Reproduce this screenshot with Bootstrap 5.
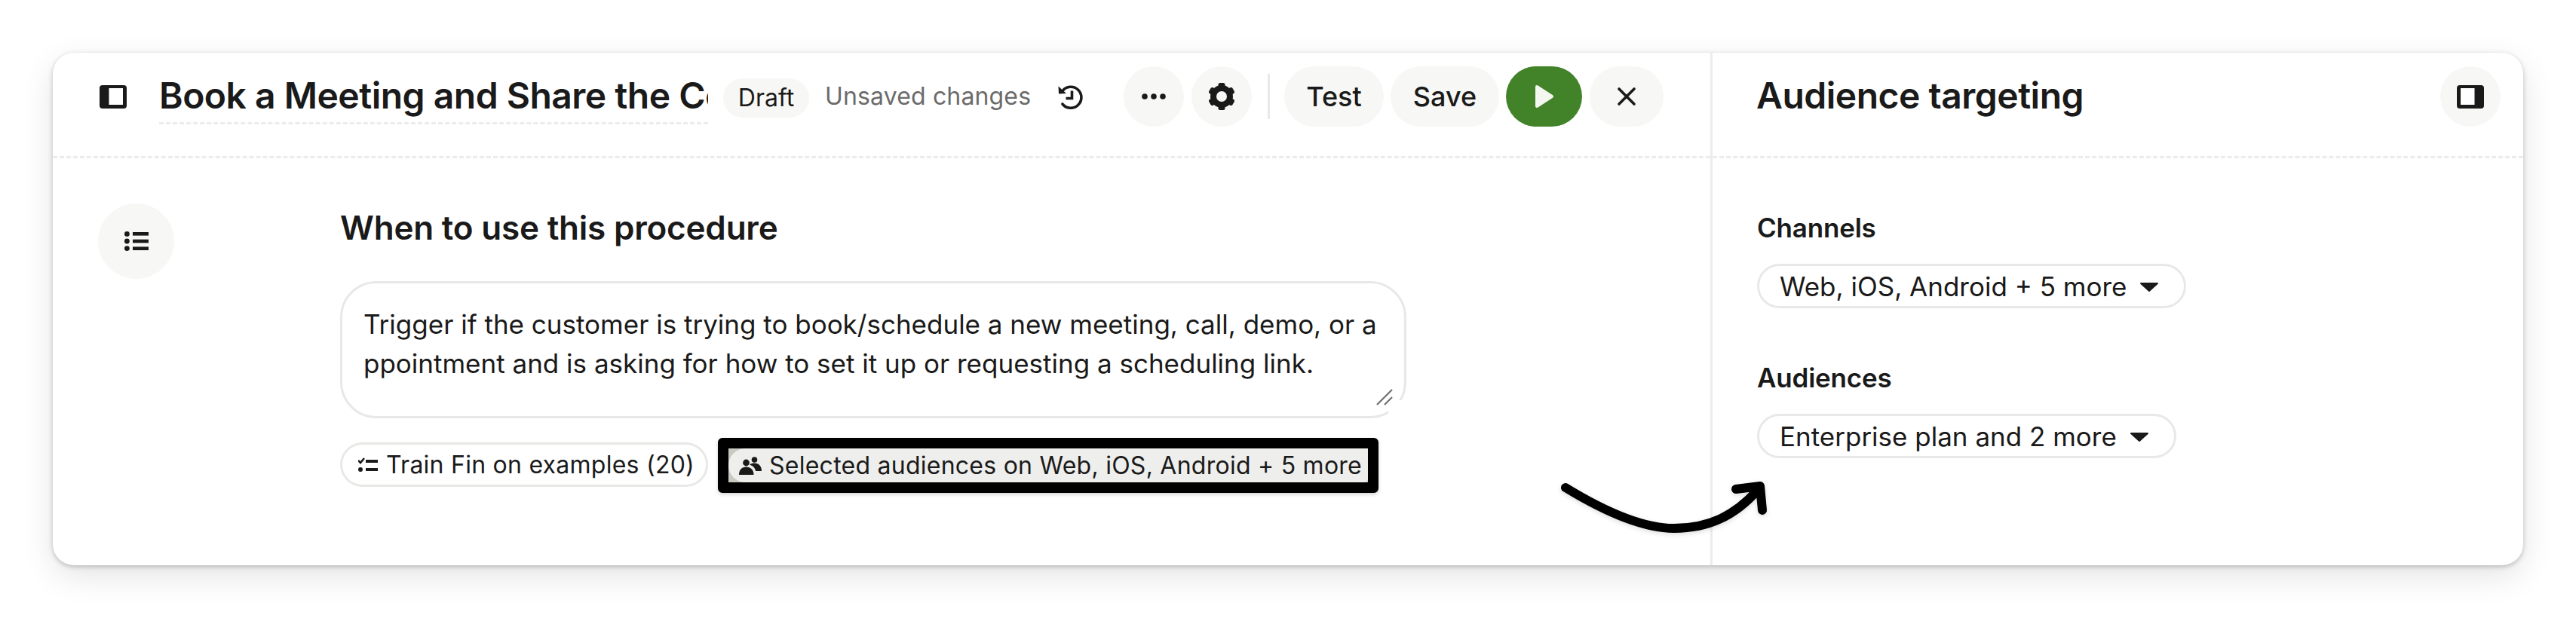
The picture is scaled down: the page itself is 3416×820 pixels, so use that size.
<!DOCTYPE html>
<html lang="en">
<head>
  <meta charset="UTF-8" />
  <title>Audience targeting</title>
  <link href="https://cdn.jsdelivr.net/npm/bootstrap@5.3.0/dist/css/bootstrap.min.css" rel="stylesheet">
  <style>
    body { background: #fff; font-family: "Inter", "Liberation Sans", sans-serif; color: #1a1a1a; padding: 70px 0 0 70px; width: 3416px; height: 820px; overflow: hidden; }
    .shell { width: 3276px; height: 680px; border-radius: 28px; background: #fff; box-shadow: 0 2px 6px rgba(0,0,0,.22), 0 14px 44px rgba(0,0,0,.11); }
    .main-pane { width: 2201px; border-right: 3px solid #ececea; }
    .side-pane { width: 1075px; }
    .pane-head { height: 140px; padding-top: 18px; border-bottom: 3px dashed #ececea; }
    .main-pane .pane-head { padding-left: 62px; padding-right: 62px; }
    .side-pane .pane-head { padding-left: 58px; padding-right: 30px; }
    .panel-icon { margin-top: 25px; flex-shrink: 0; }
    .title-clip { width: 728px; margin-left: 43px; margin-top: 4px; height: 73px; line-height: 70px; font-size: 48px; font-weight: 600; letter-spacing: -.5px; white-space: nowrap; overflow: hidden; border-bottom: 3px dashed #ececea; }
    .draft-tag { margin-left: 20px; height: 52px; width: 114px; border-radius: 26px; background: #f7f7f5; font-size: 32px; }
    .unsaved-note { margin-left: 21px; margin-top: 16px; font-size: 32px; letter-spacing: .15px; color: #6b6b6b; }
    .history-icon { margin-left: 35px; margin-top: 23px; flex-shrink: 0; }
    .soft-btn { height: 80px; min-width: 80px; padding: 0; border: 0; border-radius: 40px; background: #f7f7f5; color: #1a1a1a; font-size: 36px; font-weight: 500; }
    .soft-btn:hover { background: #f7f7f5; color: #1a1a1a; }
    .act-gap { margin-left: 10px; }
    .act-gap-tight { margin-left: 9px; }
    .test-btn { width: 132px; }
    .save-btn { width: 144px; }
    .play-btn { width: 101px; background: #42832a; }
    .play-btn:hover { background: #42832a; }
    .close-btn { width: 98px; }
    .head-sep { width: 3px; height: 60px; margin: 10px 19px 0 21px; background: #e8e8e6; }
    .side-title { font-size: 48px; font-weight: 600; letter-spacing: -.5px; margin: 4px 0 0; line-height: 70px; }
    .outline-btn { width: 101px; height: 100px; border-radius: 50%; background: #f7f7f5; margin-left: 60px; margin-top: 60px; flex-shrink: 0; }
    .proc-col { width: 1414px; margin-left: 220px; padding-top: 60px; }
    .proc-heading { font-size: 44px; font-weight: 600; line-height: 64px; margin: 0 0 39px; letter-spacing: -.2px; }
    .field-wrap { height: 182px; }
    .trigger-field { height: 182px; border: 3px solid #e8e8e6; border-radius: 48px; padding: 28px 28px; font-size: 35px; line-height: 52px; color: #1a1a1a; resize: none; word-break: break-all; font-family: inherit; overflow: hidden; }
    .trigger-field:focus { border-color: #e8e8e6; box-shadow: none; }
    .resize-grip { position: absolute; right: -2px; bottom: -2px; }
    .chip-row { margin-top: 26px; }
    .chip { height: 59px; border: 3px solid #e8e8e6; border-radius: 30px; font-size: 32px; letter-spacing: .25px; background: #fff; white-space: nowrap; }
    .train-chip { width: 488px; margin-top: 6px; padding-left: 21px; gap: 11px; }
    .callout-box { margin-left: 13px; width: 876px; height: 73px; border: 14px solid #000; border-radius: 6px; background: #c9c9c0; box-shadow: 0 2px 5px rgba(0,0,0,.18); }
    .callout-chip { height: 45px; width: 100%; background: #eeeeec; border-radius: 28px 0 6px 28px; padding-left: 14px; gap: 10px; font-size: 32px; letter-spacing: .25px; white-space: nowrap; }
    .side-body { padding: 60px 0 0 59px; }
    .side-label { font-size: 35px; font-weight: 600; letter-spacing: -.2px; line-height: 64px; margin: 0; }
    .pick-chip { height: 59px; border: 3px solid #e8e8e6; border-radius: 30px; padding: 2px 0 0 27px; font-size: 35px; background: #fff; color: #1a1a1a; margin-top: 16px; white-space: nowrap; gap: 17px; }
    .pick-chip:hover { background: #fff; color: #1a1a1a; border-color: #e8e8e6; }
    .channels-chip { width: 569px; }
    .audiences-chip { width: 556px; }
    .side-group + .side-group { margin-top: 60px; }
    .swoosh { position: absolute; left: 1990px; top: 560px; filter: drop-shadow(0 2px 3px rgba(0,0,0,.14)); }
  </style>
</head>
<body>
  <div class="shell d-flex position-relative">
    <!-- left pane -->
    <div class="main-pane">
      <div class="pane-head d-flex align-items-start">
        <svg class="panel-icon" width="36" height="31" viewBox="0 0 36 31"><rect width="36" height="31" rx="4" fill="#1a1a1a"/><rect x="12.5" y="4" width="18.5" height="22" fill="#fff"/></svg>
        <div class="title-clip">Book a Meeting and Share the Co</div>
        <span class="draft-tag d-flex align-items-center justify-content-center mt-3">Draft</span>
        <span class="unsaved-note">Unsaved changes</span>
        <svg class="history-icon" width="34" height="34" viewBox="0 0 34 34" fill="none"><path d="M7 9.5A14 14 0 1 1 7 27" stroke="#1a1a1a" stroke-width="3.6" stroke-linecap="round"/><path d="M1.5 3.5 2 13.5l10-.5z" fill="#1a1a1a"/><path d="M19.5 9.5v10h-8" stroke="#1a1a1a" stroke-width="3.6"/></svg>
        <div class="ms-auto d-flex align-items-start">
          <button class="btn soft-btn d-flex align-items-center justify-content-center" type="button" aria-label="More">
            <svg width="32" height="8" viewBox="0 0 32 8"><circle cx="4" cy="4" r="3.8" fill="#1a1a1a"/><circle cx="16" cy="4" r="3.8" fill="#1a1a1a"/><circle cx="28" cy="4" r="3.8" fill="#1a1a1a"/></svg>
          </button>
          <button class="btn soft-btn act-gap d-flex align-items-center justify-content-center" type="button" aria-label="Settings">
            <svg width="36" height="36" viewBox="0 0 36 36"><circle cx="18" cy="18" r="11" fill="none" stroke="#1a1a1a" stroke-width="8"/><g fill="#1a1a1a"><rect x="13.5" y="0" width="9" height="8" rx="2.5"/><rect x="13.5" y="0" width="9" height="8" rx="2.5" transform="rotate(60 18 18)"/><rect x="13.5" y="0" width="9" height="8" rx="2.5" transform="rotate(120 18 18)"/><rect x="13.5" y="0" width="9" height="8" rx="2.5" transform="rotate(180 18 18)"/><rect x="13.5" y="0" width="9" height="8" rx="2.5" transform="rotate(240 18 18)"/><rect x="13.5" y="0" width="9" height="8" rx="2.5" transform="rotate(300 18 18)"/></g></svg>
          </button>
          <div class="head-sep"></div>
          <button class="btn soft-btn test-btn" type="button">Test</button>
          <button class="btn soft-btn save-btn act-gap-tight" type="button">Save</button>
          <button class="btn soft-btn play-btn act-gap-tight d-flex align-items-center justify-content-center" type="button" aria-label="Run">
            <svg width="26" height="32" viewBox="0 0 26 32"><path d="M3 3 23 16 3 29z" fill="#f4f6f0" stroke="#f4f6f0" stroke-width="4" stroke-linejoin="round"/></svg>
          </button>
          <button class="btn soft-btn close-btn act-gap d-flex align-items-center justify-content-center" type="button" aria-label="Close">
            <svg width="26" height="26" viewBox="0 0 26 26"><path d="M3 3l20 20M23 3 3 23" stroke="#1a1a1a" stroke-width="3.6" stroke-linecap="round"/></svg>
          </button>
        </div>
      </div>
      <div class="d-flex">
        <div class="outline-btn d-flex align-items-center justify-content-center">
          <svg width="32" height="26" viewBox="0 0 32 26" fill="#1a1a1a"><circle cx="3.4" cy="3.4" r="3.4"/><circle cx="3.4" cy="13" r="3.4"/><circle cx="3.4" cy="22.6" r="3.4"/><rect x="11" y="1" width="21" height="4.6"/><rect x="11" y="10.7" width="21" height="4.6"/><rect x="11" y="20.4" width="21" height="4.6"/></svg>
        </div>
        <div class="proc-col">
          <h2 class="proc-heading">When to use this procedure</h2>
          <div class="field-wrap position-relative">
            <textarea class="form-control trigger-field" rows="2" aria-label="When to use this procedure">Trigger if the customer is trying to book/schedule a new meeting, call, demo, or appointment and is asking for how to set it up or requesting a scheduling link.</textarea>
            <svg class="resize-grip" width="44" height="44" viewBox="0 0 44 44"><rect x="18" y="18" width="26" height="26" fill="#fff"/><path d="M3 24 23 4M13 24 23 14" stroke="#6f6f6f" stroke-width="2.2" fill="none"/></svg>
          </div>
          <div class="chip-row d-flex align-items-start">
            <span class="chip train-chip d-inline-flex align-items-center">
              <svg width="26" height="20" viewBox="0 0 26 20" fill="#1a1a1a"><path d="M0 4l3 3 5-6" fill="none" stroke="#1a1a1a" stroke-width="2.6"/><circle cx="3" cy="16" r="3"/><rect x="10" y="3" width="16" height="4"/><rect x="10" y="14" width="16" height="4"/></svg>
              Train Fin on examples (20)
            </span>
            <div class="callout-box overflow-hidden">
              <span class="callout-chip d-flex align-items-center">
                <svg width="30" height="24" viewBox="0 0 30 24" fill="#1a1a1a"><circle cx="9.5" cy="8" r="4.4"/><path d="M0 24c0-7 4-10.500 9.500-10.500S19.500 17 19.500 24z"/><circle cx="20.500" cy="4" r="3.800"/><path d="M14 10.500c2-1.500 4-2 6.500-2 5.500 0 9.500 4 9.500 10.500h-8c-.5-4-3.500-7-8-8.500z"/></svg>
                Selected audiences on Web, iOS, Android + 5 more
              </span>
            </div>
          </div>
        </div>
      </div>
    </div>
    <!-- right pane -->
    <div class="side-pane">
      <div class="pane-head d-flex align-items-start justify-content-between">
        <h1 class="side-title">Audience targeting</h1>
        <button class="btn soft-btn d-flex align-items-center justify-content-center" type="button" aria-label="Toggle panel">
          <svg width="36" height="31" viewBox="0 0 36 31"><rect width="36" height="31" rx="4" fill="#1a1a1a"/><rect x="5" y="4" width="18.500" height="22" fill="#fff"/></svg>
        </button>
      </div>
      <div class="side-body">
        <div class="side-group">
          <p class="side-label">Channels</p>
          <button class="btn pick-chip channels-chip d-flex align-items-center" type="button">Web, iOS, Android + 5 more
            <svg width="26" height="14" viewBox="0 0 26 14"><path d="M2 2h22L13 12z" fill="#1a1a1a" stroke="#1a1a1a" stroke-width="2" stroke-linejoin="round"/></svg>
          </button>
        </div>
        <div class="side-group">
          <p class="side-label">Audiences</p>
          <button class="btn pick-chip audiences-chip d-flex align-items-center" type="button">Enterprise plan and 2 more
            <svg width="26" height="14" viewBox="0 0 26 14"><path d="M2 2h22L13 12z" fill="#1a1a1a" stroke="#1a1a1a" stroke-width="2" stroke-linejoin="round"/></svg>
          </button>
        </div>
      </div>
    </div>
    <!-- hand drawn annotation -->
    <svg class="swoosh" width="290" height="90" viewBox="0 0 290 90" fill="none"><path d="M16 17C70 50 120 71 160 71 205 71 240 55 271 20" stroke="#000" stroke-width="12" stroke-linecap="round"/><path d="M242 19 274 15 277 47" stroke="#000" stroke-width="12" stroke-linecap="round" stroke-linejoin="round"/></svg>
  </div>
  <script src="https://cdn.jsdelivr.net/npm/bootstrap@5.3.0/dist/js/bootstrap.bundle.min.js"></script>
</body>
</html>
